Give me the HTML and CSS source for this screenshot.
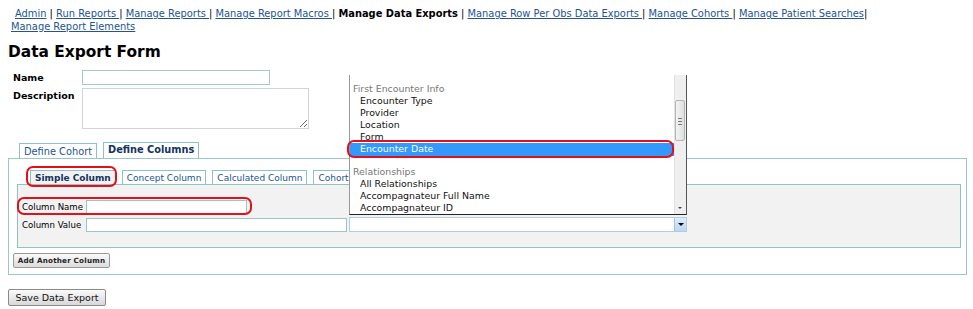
FILE: index.html
```html
<!DOCTYPE html>
<html lang="en">
<head>
    <meta charset="UTF-8">
    <title>Data Export Form</title>
    <link rel="stylesheet" href="styles.css">
</head>
<body>
    <div class="nav">
        <span class="lead"></span><a href="#">Admin</a> | <a href="#">Run Reports </a>| <a href="#">Manage Reports </a>| <a href="#">Manage Report Macros </a>| <b>Manage Data Exports</b> | <a href="#">Manage Row Per Obs Data Exports </a>| <a href="#">Manage Cohorts </a>| <a href="#">Manage Patient Searches</a>|<br>
        <a href="#">Manage Report Elements</a>
    </div>

    <h1 class="title">Data Export Form</h1>

    <table class="meta">
        <tr>
            <th>Name</th>
            <td><input type="text" class="name-input"></td>
        </tr>
        <tr>
            <th>Description</th>
            <td><textarea class="desc-input"></textarea></td>
        </tr>
    </table>

    <div class="tabs">
        <span class="tab">Define Cohort</span>
        <span class="tab active">Define Columns</span>
    </div>
    <div class="panel">
        <div class="subtabs">
            <span class="subtab active">Simple Column</span>
            <span class="subtab">Concept Column</span>
            <span class="subtab">Calculated Column</span>
            <span class="subtab last">Cohort</span>
        </div>
        <div class="subpanel">
            <div class="row">
                <label>Column Name</label>
                <input type="text" class="col-name">
            </div>
            <div class="row">
                <label>Column Value</label>
                <input type="text" class="col-value">
                <div class="select-box"><span class="select-btn"></span></div>
            </div>
        </div>
        <button class="small-btn">Add Another Column</button>
    </div>

    <button class="save-btn">Save Data Export</button>

    <!-- open dropdown of the column value select -->
    <div class="listbox">
        <div class="options">
            <div class="group">First Encounter Info</div>
            <div class="opt">Encounter Type</div>
            <div class="opt">Provider</div>
            <div class="opt">Location</div>
            <div class="opt">Form</div>
            <div class="opt selected">Encounter Date</div>
            <div class="group gap">Relationships</div>
            <div class="opt">All Relationships</div>
            <div class="opt">Accompagnateur Full Name</div>
            <div class="opt">Accompagnateur ID</div>
        </div>
        <div class="scrollbar">
            <div class="thumb"><span></span></div>
            <div class="arrow"></div>
        </div>
    </div>

    <!-- red annotation marks -->
    <div class="mark mark-date"></div>
    <div class="mark mark-simple"></div>
    <div class="mark mark-name"></div>
</body>
</html>
```

FILE: styles.css
```css
body {
    font-family: 'DejaVu Sans', Verdana, sans-serif;
    color: #000;
    margin: 0;
    padding: 0;
    background: #fff;
    position: relative;
    width: 973px;
    height: 309px;
    overflow: hidden;
}
a {
    color: #24558f;
}
.nav {
    margin: 7px 0 0 11px;
    font-size: 9.9px;
    line-height: 13px;
    white-space: nowrap;
}
.nav .lead {
    display: inline-block;
    width: 4px;
}
.title {
    font-size: 15.4px;
    margin: 9px 0 0 8px;
    line-height: 20px;
}
.meta {
    border-collapse: collapse;
    margin: 8px 0 0 13px;
}
.meta th {
    text-align: left;
    vertical-align: top;
    font-size: 9.5px;
    padding: 1px 8px 0 0;
    width: 60px;
    line-height: 14px;
}
.meta td {
    padding: 0 0 3px 0;
}
.name-input {
    width: 188px;
    height: 15px;
    box-sizing: border-box;
    border: 1px solid #a8c9cb;
    margin: 0;
    display: block;
}
.desc-input {
    width: 227px;
    height: 41px;
    box-sizing: border-box;
    border: 1px solid #cdd5d5;
    margin: 0;
    display: block;
    resize: both;
}
.tabs {
    display: flex;
    gap: 6px;
    margin: 11px 0 0 19px;
    font-size: 9.8px;
    align-items: flex-end;
    height: 15px;
}
.tab {
    border: 1px solid #8fc2c2;
    border-bottom: none;
    padding: 1px 4px 0 4px;
    height: 13px;
    line-height: 14px;
    color: #24558f;
}
.tab.active {
    font-weight: bold;
    color: #14345e;
    height: 15px;
    padding: 0 4px;
}
.panel {
    border: 1px solid #9cc6c6;
    margin: 0 6px 0 8px;
    width: 959px;
    box-sizing: border-box;
    padding: 11px 5px 6px 4px;
    height: 117px;
}
.subtabs {
    display: flex;
    gap: 6px;
    margin-left: 17px;
    font-size: 9px;
    align-items: flex-end;
    height: 14px;
}
.subtab {
    border: 1px solid #8fc2c2;
    border-bottom: none;
    padding: 0 4px;
    height: 13px;
    line-height: 14px;
    color: #24558f;
    background: #fff;
}
.subtab.active {
    font-weight: bold;
    color: #14345e;
    background: #f2f2f2;
}
.subtab.last {
    padding-right: 40px;
}
.subpanel {
    background: #f2f2f2;
    border: 1px solid #8fc2c2;
    height: 64px;
    box-sizing: border-box;
    padding: 14px 0 0 4px;
    margin-left: 4px;
}
.row {
    display: flex;
    align-items: center;
    height: 15px;
    margin-bottom: 3px;
    font-size: 8.6px;
}
.row label {
    width: 64px;
}
.row input {
    height: 14px;
    box-sizing: border-box;
    border: 1px solid #9cc6c6;
    margin: 0;
    background: #fff;
}
.col-name {
    width: 161px;
}
.col-value {
    width: 261px;
}
.select-box {
    width: 338px;
    height: 15px;
    box-sizing: border-box;
    border: 1px solid #b3cce0;
    background: #fff;
    margin-left: 2px;
    display: flex;
    justify-content: flex-end;
}
.select-btn {
    width: 11px;
    height: 13px;
    background: linear-gradient(#dcecfb, #b8d8f4);
    border-left: 1px solid #9ec4e6;
    position: relative;
}
.select-btn::after {
    content: "";
    position: absolute;
    left: 3px;
    top: 5px;
    border-left: 3px solid transparent;
    border-right: 3px solid transparent;
    border-top: 3px solid #000;
}
.small-btn {
    margin: 5px 0 0 0;
    font-family: 'DejaVu Sans', Verdana, sans-serif;
    font-size: 7.2px;
    font-weight: bold;
    letter-spacing: 0.2px;
    padding: 0;
    white-space: nowrap;
    width: 97px;
    height: 15px;
    border: 1px solid #9a9a9a;
    border-radius: 2px;
    background: linear-gradient(#fafafa, #dcdcdc);
    color: #222;
    display: block;
}
.save-btn {
    margin: 14px 0 0 8px;
    font-family: 'DejaVu Sans', Verdana, sans-serif;
    font-size: 9.5px;
    padding: 0 6px;
    height: 17px;
    width: 98px;
    border: 1px solid #8a8a8a;
    border-radius: 2px;
    background: linear-gradient(#fafafa, #d8d8d8);
    color: #111;
    display: block;
}
/* open select list, lies over the form */
.listbox {
    position: absolute;
    left: 349px;
    top: 75px;
    width: 338px;
    height: 140px;
    box-sizing: border-box;
    border-left: 1px solid #9a9a9a;
    border-bottom: 1px solid #222;
    border-right: 1px solid #555;
    background: #fff;
    display: flex;
    overflow: hidden;
}
.options {
    flex: 1;
    padding-top: 8px;
    font-size: 9.4px;
}
.group {
    color: #777;
    line-height: 12px;
    padding-left: 3px;
}
.group.gap {
    margin-top: 10px;
}
.opt {
    line-height: 12px;
    padding-left: 10px;
    color: #111;
}
.opt.selected {
    background: #3399ff;
    color: #fff;
    height: 13px;
}
.scrollbar {
    width: 11px;
    background: #efefef;
    border-left: 1px solid #e2e2e2;
    position: relative;
}
.thumb {
    position: absolute;
    top: 25px;
    left: 0;
    width: 10px;
    height: 41px;
    box-sizing: border-box;
    border: 1px solid #b5b5b5;
    border-radius: 2px;
    background: linear-gradient(90deg, #f4f4f4, #dedede);
}
.thumb span {
    position: absolute;
    left: 2px;
    top: 17px;
    width: 4px;
    height: 5px;
    border-top: 1px solid #777;
    border-bottom: 1px solid #777;
}
.thumb span::after {
    content: "";
    position: absolute;
    left: 0;
    top: 2px;
    width: 4px;
    border-top: 1px solid #777;
}
.arrow {
    position: absolute;
    left: 3px;
    bottom: 5px;
    border-left: 2px solid transparent;
    border-right: 2px solid transparent;
    border-top: 2px solid #444;
}
.mark {
    position: absolute;
    border: 2px solid #e3101c;
    border-radius: 7px;
}
.mark-date {
    left: 347px;
    top: 140px;
    width: 323px;
    height: 14px;
}
.mark-simple {
    left: 26px;
    top: 166px;
    width: 87px;
    height: 17px;
}
.mark-name {
    left: 17px;
    top: 197px;
    width: 231px;
    height: 14px;
}
```
